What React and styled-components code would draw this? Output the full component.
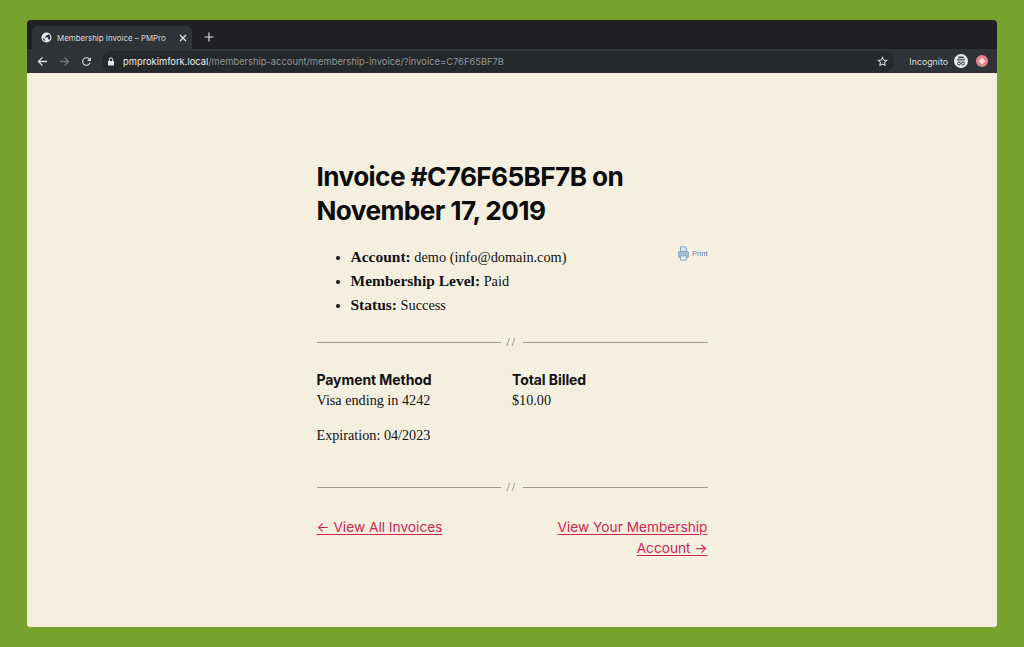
import React from "react";
import styled, { createGlobalStyle } from "styled-components";

const Global = createGlobalStyle`
  html, body { margin: 0; padding: 0; background: #76a22e; }
  body { width: 1024px; height: 647px; overflow: hidden; }
  svg { flex-shrink: 0; }
`;
const Frame = styled.div`
  box-sizing: border-box;
  width: 1024px;
  height: 647px;
  padding: 20px 27px;
`;
const Win = styled.div`
  display: flex;
  flex-direction: column;
  height: 607px;
  border-radius: 3px;
  overflow: hidden;
  background: #f5efe0;
`;
const TabStrip = styled.div`
  display: flex;
  align-items: flex-end;
  height: 29px;
  padding-left: 5px;
  background: #1e2024;
`;
const Tab = styled.div`
  display: flex;
  align-items: center;
  box-sizing: border-box;
  width: 160px;
  height: 23px;
  padding: 0 5px 0 9px;
  border-radius: 6px 6px 0 0;
  background: #2f3337;
  color: #d8d9da;
  font: 7.9px "Inter", sans-serif;
`;
const TabTitle = styled.span`
  flex: 1;
  margin-left: 5px;
  white-space: nowrap;
`;
const NewTab = styled.div`
  display: flex;
  align-self: center;
  margin: 5px 0 0 12px;
`;
const Toolbar = styled.div`
  display: flex;
  align-items: center;
  height: 24px;
  padding: 0 9px;
  background: #2f3337;
  color: #d8d9da;
`;
const NavIcon = styled.span`
  display: flex;
  justify-content: center;
  width: 13px;
  margin-right: 9px;
`;
const Omnibox = styled.div`
  display: flex;
  align-items: center;
  flex: 1;
  height: 21px;
  padding: 0 6px 0 5px;
  border-radius: 11px;
  background: #26292c;
  font: 9.35px "Inter", sans-serif;
`;
const Host = styled.span`
  margin-left: 8px;
  color: #eceded;
`;
const UrlPath = styled.span`
  flex: 1;
  color: #8f9497;
  white-space: nowrap;
`;
const Incognito = styled.span`
  margin-left: 15px;
  color: #dcdddd;
  font: 8.8px "Inter", sans-serif;
`;
const Avatar = styled.span`
  display: flex;
  margin-left: 6px;
`;
const Ext = styled.span`
  display: flex;
  margin-left: 8px;
`;
const Page = styled.main`
  flex: 1;
  width: 391px;
  margin: 0 auto;
  padding-top: 87px;
`;
const Title = styled.h1`
  margin: 0 0 17px;
  color: #0c0c0c;
  font: 700 26.2px/34px "Inter", sans-serif;
  letter-spacing: -0.6px;
`;
const InfoRow = styled.div`
  display: flex;
  justify-content: space-between;
  align-items: flex-start;
`;
const InfoList = styled.ul`
  margin: 0;
  padding: 0 0 0 34px;
  color: #111;
  font: 14.3px/24px "Liberation Serif", serif;
`;
const Label = styled.strong`
  font-size: 15.5px;
  font-weight: 700;
`;
const PrintLink = styled.a`
  display: flex;
  align-items: center;
  gap: 3px;
  margin-top: 1px;
  color: #5b7fa6;
  font: 7.5px "Liberation Sans", sans-serif;
`;
const Divider = styled.div`
  display: flex;
  align-items: center;
  gap: 6px;
  margin: ${(p) => p.$m};
  color: #6f6a60;
  font: 12px/14px "Liberation Serif", serif;
  letter-spacing: 2px;
  &::before, &::after {
    content: "";
    height: 1px;
    background: #a0978a;
  }
  &::before { width: 184px; }
  &::after { flex: 1; }
`;
const Columns = styled.div`
  display: grid;
  grid-template-columns: 195.5px 1fr;
`;
const ColHead = styled.h3`
  margin: 0;
  color: #111;
  font: 700 14px/20px "Inter", sans-serif;
  letter-spacing: -0.08px;
`;
const ColText = styled.p`
  margin: ${(p) => p.$m || "0"};
  color: #111;
  font: 14.2px/20px "Liberation Serif", serif;
`;
const Nav = styled.nav`
  display: flex;
  justify-content: space-between;
  align-items: flex-start;
`;
const PinkLink = styled.a`
  color: #cd2653;
  font: 13.7px/21px "Inter", sans-serif;
  text-decoration: underline;
  text-underline-offset: 2px;
`;
const RightLink = styled(PinkLink)`
  width: 170px;
  text-align: right;
`;

const Globe = () => (
  <svg width="11" height="11" viewBox="0 0 24 24" fill="#e6e7e8">
    <path d="M12 1a11 11 0 1 0 0 22 11 11 0 0 0 0-22zM4 12l5 5v1.500c0 1 1 2 2 2A8.500 8.500 0 0 1 4 12zm14.500 5.500c-.3-.8-1-1.500-2-1.500h-1v-3c0-.5-.500-1-1-1h-6v-2h2c.5 0 1-.5 1-1V7h2c1 0 2-1 2-2v-.5a8.500 8.500 0 0 1 3 13z" />
  </svg>
);
const Close = () => (
  <svg width="8" height="8" viewBox="0 0 8 8" stroke="#e6e7e8" strokeWidth="1.200">
    <path d="M1 1l6 6M7 1L1 7" />
  </svg>
);
const Plus = () => (
  <svg width="10" height="10" viewBox="0 0 10 10" stroke="#d8d9da" strokeWidth="1.200">
    <path d="M5 .5v9M.5 5h9" />
  </svg>
);
const Arrow = ({ color, flip }) => (
  <svg width="11" height="11" viewBox="0 0 12 12" fill="none" stroke={color} strokeWidth="1.400" style={flip ? { transform: "scaleX(-1)" } : undefined}>
    <path d="M11 6H1.500M6 1.500L1.500 6 6 10.500" />
  </svg>
);
const Reload = () => (
  <svg width="13" height="13" viewBox="0 0 24 24" fill="#dcdddd">
    <path d="M17.650 6.350A8 8 0 1 0 19.730 14h-2.080A6 6 0 1 1 12 6c1.660 0 3.140.69 4.220 1.780L13 11h7V4z" />
  </svg>
);
const Lock = () => (
  <svg width="8" height="9" viewBox="0 0 8 9" fill="#e4e5e5">
    <path d="M1 4h6v4.500H1z" />
    <path d="M2.300 4V2.600a1.700 1.700 0 0 1 3.400 0V4" fill="none" stroke="#e4e5e5" />
  </svg>
);
const Star = () => (
  <svg width="11" height="11" viewBox="0 0 24 24" fill="none" stroke="#dcdddd" strokeWidth="2.200">
    <path d="M12 3l2.800 5.900 6.400.8-4.700 4.400 1.200 6.400L12 17.400l-5.700 3.100 1.200-6.400L2.800 9.700l6.400-.8z" />
  </svg>
);
const IncognitoIcon = () => (
  <svg width="14" height="14" viewBox="0 0 14 14">
    <circle cx="7" cy="7" r="7" fill="#e8eaea" />
    <path d="M4.500 2.600h5l.5 1.500H4zM3 4.800h8v1H3zM3.500 6.500h7v.8h-7z" fill="#3f4246" />
    <circle cx="5" cy="9.600" r="1.400" fill="none" stroke="#3f4246" />
    <circle cx="9" cy="9.600" r="1.400" fill="none" stroke="#3f4246" />
    <path d="M6.300 9.400h1.400" stroke="#3f4246" />
  </svg>
);
const ExtIcon = () => (
  <svg width="12" height="12" viewBox="0 0 12 12">
    <circle cx="6" cy="6" r="6" fill="#e48389" />
    <path d="M6 2.500L9.500 6 6 9.500 2.500 6z" fill="#f7d8d6" />
  </svg>
);
const Printer = () => (
  <svg width="11" height="15" viewBox="0 0 11 15">
    <path d="M2.500 .8h5l1 1.200v4h-6z" fill="#dfe5ea" stroke="#6f93b8" strokeWidth=".8" />
    <rect x=".5" y="5.500" width="10" height="6" rx="1" fill="#a3bdd6" stroke="#6f93b8" strokeWidth=".6" />
    <path d="M2.500 10h6v4.200h-6z" fill="#e8edf1" stroke="#7f9fc0" strokeWidth=".8" />
  </svg>
);

export default function App() {
  return (
    <Frame>
      <Global />
      <Win>
        <TabStrip>
          <Tab>
            <Globe />
            <TabTitle>Membership Invoice – PMPro</TabTitle>
            <Close />
          </Tab>
          <NewTab><Plus /></NewTab>
        </TabStrip>
        <Toolbar>
          <NavIcon><Arrow color="#dcdddd" /></NavIcon>
          <NavIcon><Arrow color="#74787b" flip /></NavIcon>
          <NavIcon><Reload /></NavIcon>
          <Omnibox>
            <Lock />
            <Host>pmprokimfork.local</Host>
            <UrlPath>/membership-account/membership-invoice/?invoice=C76F65BF7B</UrlPath>
            <Star />
          </Omnibox>
          <Incognito>Incognito</Incognito>
          <Avatar><IncognitoIcon /></Avatar>
          <Ext><ExtIcon /></Ext>
        </Toolbar>
        <Page>
          <Title>Invoice #C76F65BF7B on November 17, 2019</Title>
          <InfoRow>
            <InfoList>
              <li><Label>Account:</Label> demo (info@domain.com)</li>
              <li><Label>Membership Level:</Label> Paid</li>
              <li><Label>Status:</Label> Success</li>
            </InfoList>
            <PrintLink><Printer />Print</PrintLink>
          </InfoRow>
          <Divider $m="18px 0 21px">//</Divider>
          <Columns>
            <div>
              <ColHead>Payment Method</ColHead>
              <ColText>Visa ending in 4242</ColText>
              <ColText $m="15px 0 0">Expiration: 04/2023</ColText>
            </div>
            <div>
              <ColHead>Total Billed</ColHead>
              <ColText>$10.00</ColText>
            </div>
          </Columns>
          <Divider $m="35px 0 23px">//</Divider>
          <Nav>
            <PinkLink>← View All Invoices</PinkLink>
            <RightLink>View Your Membership Account →</RightLink>
          </Nav>
        </Page>
      </Win>
    </Frame>
  );
}
